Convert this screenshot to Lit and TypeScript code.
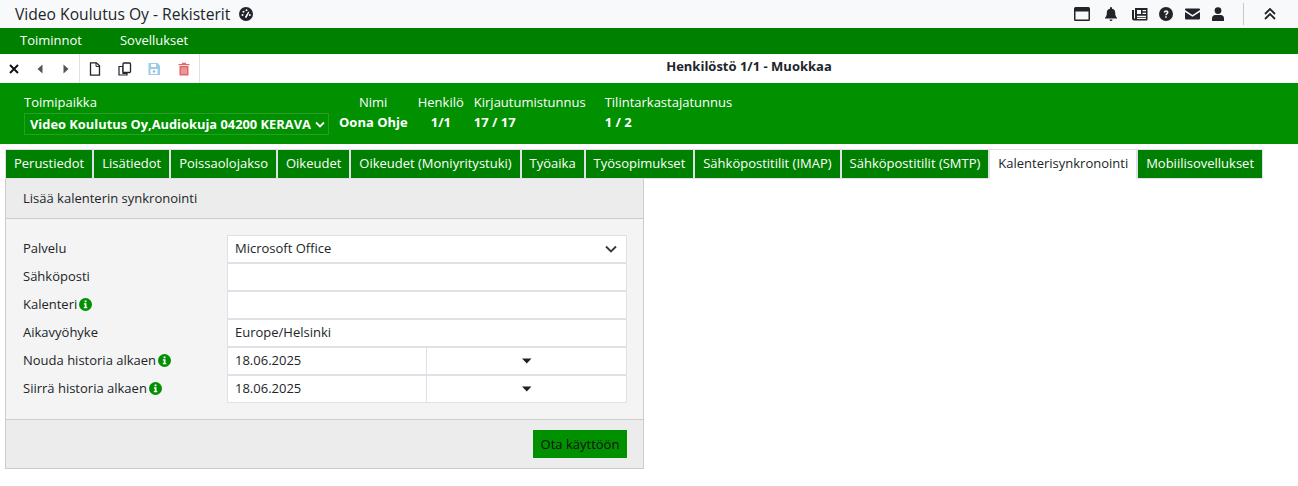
import { LitElement, html, css, svg } from "lit";
import { customElement } from "lit/decorators.js";

const ic = (vb: string, body: unknown, cls = "ic") => html`<svg class=${cls} viewBox=${vb} aria-hidden="true">${body}</svg>`;
const info = html`<svg class="info" viewBox="0 0 13 13"><circle cx="6.5" cy="6.5" r="6.5" fill="#008f00"/><path d="M5.6 2.6h1.9v1.7H5.6zM4.9 5.3h2.6v3.6h.8v1.3H4.8V8.9h.9V6.6h-.8z" fill="#fff"/></svg>`;
const caret = html`<svg class="caret" viewBox="0 0 10 6"><path d="M0 .5h9.5L4.8 5.5z" fill="#1d2128"/></svg>`;
const chev = html`<svg class="chev" viewBox="0 0 12 8"><path d="M1 1.500l5 5 5-5" fill="none" stroke="#343a40" stroke-width="1.900"/></svg>`;
const tabs = ["Perustiedot","Lisätiedot","Poissaolojakso","Oikeudet","Oikeudet (Moniyritystuki)","Työaika","Työsopimukset","Sähköpostitilit (IMAP)","Sähköpostitilit (SMTP)","Kalenterisynkronointi","Mobiilisovellukset"];

@customElement("app-root")
export class AppRoot extends LitElement {
  static styles = css`
    :host { display:block; font-family:"Open Sans",sans-serif; font-size:13px; color:#212529; width:1298px; height:486px; overflow:hidden; background:#fff; }
    .top { height:28px; background:#f8f9fa; display:flex; align-items:center; padding-left:15px; }
    .title { font-size:15.65px; color:#212529; line-height:28px; }
    .gauge { width:14px; height:14px; margin-left:9px; }
    .tools { margin-left:auto; display:flex; align-items:center; height:28px; }
    .ic { width:14px; height:14px; display:block; fill:#212529; }
    .tools .w16 { width:16px; }
    .tools .w15 { width:15px; }
    .tools .m1 { margin-right:13.5px; }
    .tools .m2 { margin-right:14px; }
    .tools .m3 { margin-right:11.5px; }
    .tools .m4 { margin-right:12px; }
    .tools .m5 { margin-right:11px; }
    .sep { width:1px; height:22px; background:#c4c8cc; margin:0 20px 0 18px; }
    .dbl { width:12px; height:12px; margin-right:22px; }
    .menu { height:26px; background:#008000; display:flex; align-items:center; color:#fff; padding:0 0 2px 20px; box-sizing:border-box; gap:38px; }
    .bar { height:29px; display:flex; align-items:center; }
    .grp { display:flex; align-items:center; height:29px; border-right:1px solid #dee2e6; box-sizing:border-box; }
    .g1 { width:80px; padding-left:1px; }
    .g2 { width:120px; }
    .cell { display:flex; justify-content:center; align-items:center; height:29px; }
    .g1 .cell { width:26.33px; }
    .g2 .cell { width:29.75px; }
    .h { flex:1; text-align:center; font-weight:700; font-size:13px; padding-bottom:5px; }
    .head { height:61px; background:#009000; color:#fff; display:flex; box-sizing:border-box; padding:11px 0 0 24px; }
    .col { display:flex; flex-direction:column; }
    .c1 { margin-right:9px; }
    .c2 { margin-right:10px; padding-left:1px; }
    .c3 { margin-right:10px; }
    .c4 { margin-right:19px; }
    .lab { line-height:16px; height:16px; }
    .lab.n { padding-left:20px; }
    .val { font-weight:700; line-height:18px; height:20px; margin-top:2px; display:flex; align-items:center; }
    .val.o { padding-left:13px; }
    .sel { width:305px; box-sizing:border-box; height:22px; border:1px solid #2a9c2a; padding:0 3px 0 5px; margin-top:3px; display:flex; align-items:center; justify-content:space-between; white-space:nowrap; font-weight:700; font-size:12.87px; }
    .sel svg { width:10px; height:7px; }
    .tabs { display:flex; padding:5px 0 0 5px; height:30px; position:relative; z-index:1; }
    .tab { background:#008000; color:#fff; border:1px solid #dee2e6; padding:0 7.97px; line-height:27px; height:30px; box-sizing:border-box; white-space:nowrap; }
    .tab.on { background:#fff; color:#212529; border-bottom-color:#fff; }
    .panel { margin-left:5px; width:639px; height:290px; box-sizing:border-box; border:1px solid #ccc; border-top:0; background:#f4f4f4; display:flex; flex-direction:column; }
    .ph { height:40px; background:#ececec; border-bottom:1px solid #ccc; padding-left:17px; line-height:39px; box-sizing:border-box; flex:none; }
    .body { flex:1; padding:16px 16px 0 17px; display:flex; flex-direction:column; }
    .row { display:flex; height:28px; }
    .rl { width:204px; display:flex; align-items:center; gap:2px; padding-bottom:2px; box-sizing:border-box; }
    .info { width:13px; height:13px; display:block; }
    .inp { width:400px; height:28px; box-sizing:border-box; background:#fff; border:1px solid #dee2e6; padding:0 0 2px 7px; display:flex; align-items:center; justify-content:space-between; }
    .chev { width:12px; height:8px; margin:2px 9px 0 0; }
    .inp.d { padding:0; }
    .d1 { width:199px; height:100%; padding:0 0 2px 7px; display:flex; align-items:center; border-right:1px solid #dee2e6; box-sizing:border-box; }
    .d2 { flex:1; display:flex; align-items:center; justify-content:center; padding-bottom:1px; }
    .caret { width:10px; height:6px; }
    .pf { height:49px; flex:none; background:#ececec; border-top:1px solid #ccc; box-sizing:border-box; display:flex; justify-content:flex-end; padding:10px 16px 0 0; }
    .btn { width:94px; height:28px; background:#009000; color:#111; display:flex; align-items:center; justify-content:center; }
  `;
  render() {
    return html`
      <div class="top">
        <span class="title">Video Koulutus Oy - Rekisterit</span>
        <svg class="gauge" viewBox="0 0 14 14"><circle cx="7" cy="7" r="7" fill="#212529"/><circle cx="3.500" cy="8" r="1" fill="#fff"/><circle cx="4.500" cy="4.800" r="1" fill="#fff"/><circle cx="7.500" cy="3.300" r="1" fill="#fff"/><circle cx="10.800" cy="8" r="1" fill="#fff"/><path d="M6 9.800l3.300-5.200 1 .6-2.600 5.400a1 1 0 0 1-1.700-.8z" fill="#fff"/></svg>
        <div class="tools">
          ${ic("0 0 16 14", svg`<path fill-rule="evenodd" d="M1.500 0h13A1.500 1.500 0 0 1 16 1.500v11a1.500 1.500 0 0 1-1.500 1.500h-13A1.500 1.500 0 0 1 0 12.500v-11A1.500 1.500 0 0 1 1.500 0zM1.500 4.500v8h13v-8z"/>`, "ic w16 m1")}
          ${ic("0 0 14 14", svg`<path d="M7 0a1 1 0 0 1 1 1v.7a4 4 0 0 1 3.200 4c0 3 .8 3.800 1.800 5v.8H1v-.8c1-1.200 1.800-2 1.800-5A4 4 0 0 1 6 1.700V1a1 1 0 0 1 1-1zM5.500 12.500h3a1.500 1.500 0 0 1-3 0z"/>`, "ic m2")}
          ${ic("0 0 16 14", svg`<path fill-rule="evenodd" d="M3 1h12.500v11.500a1 1 0 0 1-1 1H2a2 2 0 0 1-2-2V3h2v8.500h1zM5 3v4h4V3zm5.500 0v1.200h3.500V3zm0 2.800V7h3.500V5.800zM5 8.800v1.200h9V8.800zm0 2v1.200h9v-1.200z"/>`, "ic w16 m3")}
          ${ic("0 0 14 14", svg`<path fill-rule="evenodd" d="M7 0a7 7 0 1 1 0 14A7 7 0 0 1 7 0zM4.700 5.200l1.400.5c.2-.6.500-.9 1-.9s.8.300.8.700c0 .9-1.600 1-1.600 2.800h1.500c0-1.200 1.700-1.300 1.700-3C9.500 4 8.400 3.300 7.100 3.300c-1.200 0-2 .7-2.400 1.900zM6.200 9.200v1.500h1.500V9.200z"/>`, "ic m4")}
          ${ic("0 0 15 14", svg`<path d="M1 1.500h13a1 1 0 0 1 1 1v.6L7.500 8 0 3.100V2.500a1 1 0 0 1 1-1zM0 5l7.500 4.800L15 5v6.500a1 1 0 0 1-1 1H1a1 1 0 0 1-1-1z"/>`, "ic w15 m5")}
          ${ic("0 0 14 14", svg`<circle cx="7" cy="3.600" r="3.400"/><path d="M1 14v-2.500A3.500 3.500 0 0 1 4.500 8h5a3.500 3.500 0 0 1 3.500 3.500V14z"/>`)}
          <span class="sep"></span>
          <svg class="dbl" viewBox="0 0 12 12"><path d="M1 6l5-5 5 5M1 11l5-5 5 5" fill="none" stroke="#212529" stroke-width="1.800"/></svg>
        </div>
      </div>
      <div class="menu"><span>Toiminnot</span><span>Sovellukset</span></div>
      <div class="bar">
        <div class="grp g1">
          <span class="cell">${ic("0 0 14 14", svg`<path d="M3 3l8 8M11 3l-8 8" stroke="#111" stroke-width="1.900" fill="none"/>`)}</span>
          <span class="cell">${ic("0 0 14 14", svg`<path d="M9.500 2.500v9L4.500 7z" fill="#555"/>`)}</span>
          <span class="cell">${ic("0 0 14 14", svg`<path d="M4.500 2.500v9l5-4.500z" fill="#555"/>`)}</span>
        </div>
        <div class="grp g2">
          <span class="cell">${ic("0 0 14 14", svg`<path d="M2.500.8h6l3 3v9.400h-9z" fill="#fff" stroke="#212529" stroke-width="1.300"/><path d="M8 .8v3.600h3.500" fill="none" stroke="#212529"/>`)}</span>
          <span class="cell">${ic("0 0 14 14", svg`<path d="M1 4.500h4v7h4v1.500H1z" fill="#fff" stroke="#212529" stroke-width="1.200"/><rect x="5" y="1" width="7.500" height="9.500" rx="1" fill="#fff" stroke="#212529" stroke-width="1.300"/>`)}</span>
          <span class="cell">${ic("0 0 14 14", svg`<path d="M1.500 1h9l2.500 2.500v9.500h-11.500z" fill="#9dcbe8"/><rect x="4" y="2" width="5" height="3" fill="#fff"/><rect x="3.500" y="7" width="7" height="5" fill="#fff"/><circle cx="7" cy="9.500" r="1.200" fill="#7db9e0"/>`)}</span>
          <span class="cell">${ic("0 0 14 14", svg`<path d="M1.500 2h11v1.300h-11zM5 .8h4V2H5z" fill="#e0676a"/><path d="M2.500 4h9v9.500h-9z" fill="#e0676a"/><path d="M5 5.500v6.500M7 5.500v6.500M9 5.500v6.500" stroke="#f6c5c5" stroke-width="1"/>`)}</span>
        </div>
        <div class="h">Henkilöstö 1/1 - Muokkaa</div>
      </div>
      <div class="head">
        <div class="col c1"><span class="lab">Toimipaikka</span>
          <div class="sel">Video Koulutus Oy,Audiokuja 04200 KERAVA<svg viewBox="0 0 10 7"><path d="M1 1.500l4 4 4-4" fill="none" stroke="#fff" stroke-width="1.800"/></svg></div></div>
        <div class="col c2"><span class="lab n">Nimi</span><span class="val">Oona Ohje</span></div>
        <div class="col c3"><span class="lab">Henkilö</span><span class="val o">1/1</span></div>
        <div class="col c4"><span class="lab">Kirjautumistunnus</span><span class="val">17 / 17</span></div>
        <div class="col"><span class="lab">Tilintarkastajatunnus</span><span class="val">1 / 2</span></div>
      </div>
      <div class="tabs">${tabs.map((t) => html`<div class="tab ${t === "Kalenterisynkronointi" ? "on" : ""}">${t}</div>`)}</div>
      <div class="panel">
        <div class="ph">Lisää kalenterin synkronointi</div>
        <div class="body">
          <div class="row"><div class="rl">Palvelu</div><div class="inp">Microsoft Office${chev}</div></div>
          <div class="row"><div class="rl">Sähköposti</div><div class="inp"></div></div>
          <div class="row"><div class="rl">Kalenteri ${info}</div><div class="inp"></div></div>
          <div class="row"><div class="rl">Aikavyöhyke</div><div class="inp">Europe/Helsinki</div></div>
          <div class="row"><div class="rl">Nouda historia alkaen ${info}</div><div class="inp d"><div class="d1">18.06.2025</div><div class="d2">${caret}</div></div></div>
          <div class="row"><div class="rl">Siirrä historia alkaen ${info}</div><div class="inp d"><div class="d1">18.06.2025</div><div class="d2">${caret}</div></div></div>
        </div>
        <div class="pf"><div class="btn">Ota käyttöön</div></div>
      </div>`;
  }
}
